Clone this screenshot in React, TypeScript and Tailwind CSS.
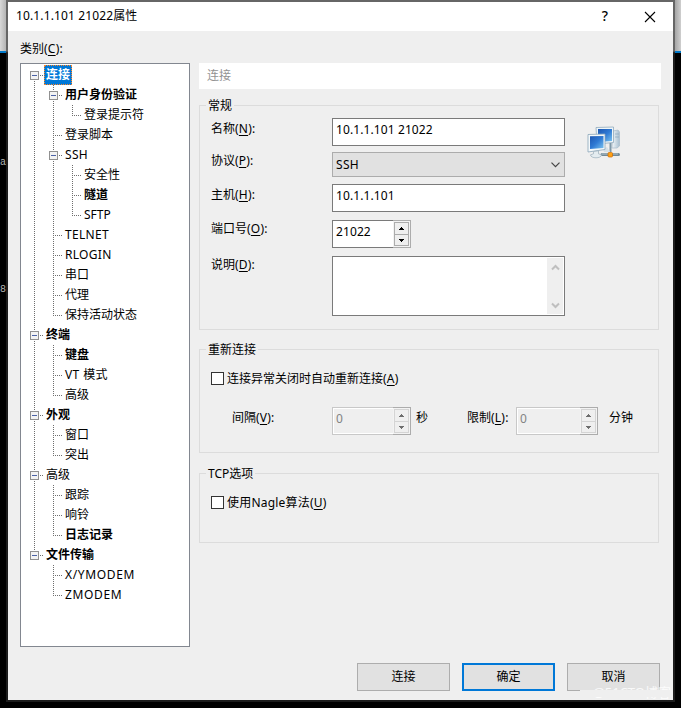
import type { ReactNode } from "react";

type Cell = "line" | "tee" | "end" | "none" | "boxFirst" | "box" | "boxLast";
type Row = { cells: Cell[]; text: string; bold?: boolean; selected?: boolean; spacing?: string };

const rows: Row[] = [
  { cells: ["boxFirst"], text: "连接", bold: true, selected: true },
  { cells: ["line", "box"], text: "用户身份验证", bold: true },
  { cells: ["line", "line", "end"], text: "登录提示符" },
  { cells: ["line", "tee"], text: "登录脚本" },
  { cells: ["line", "box"], text: "SSH", spacing: "tracking-[0.3px]" },
  { cells: ["line", "line", "tee"], text: "安全性" },
  { cells: ["line", "line", "tee"], text: "隧道", bold: true },
  { cells: ["line", "line", "end"], text: "SFTP" },
  { cells: ["line", "tee"], text: "TELNET", spacing: "tracking-[0.3px]" },
  { cells: ["line", "tee"], text: "RLOGIN", spacing: "tracking-[0.3px]" },
  { cells: ["line", "tee"], text: "串口" },
  { cells: ["line", "tee"], text: "代理" },
  { cells: ["line", "end"], text: "保持活动状态" },
  { cells: ["box"], text: "终端", bold: true },
  { cells: ["line", "tee"], text: "键盘", bold: true },
  { cells: ["line", "tee"], text: "VT 模式", spacing: "tracking-[0.4px]" },
  { cells: ["line", "end"], text: "高级" },
  { cells: ["box"], text: "外观", bold: true },
  { cells: ["line", "tee"], text: "窗口" },
  { cells: ["line", "end"], text: "突出" },
  { cells: ["box"], text: "高级" },
  { cells: ["line", "tee"], text: "跟踪" },
  { cells: ["line", "tee"], text: "响铃" },
  { cells: ["line", "end"], text: "日志记录", bold: true },
  { cells: ["boxLast"], text: "文件传输", bold: true },
  { cells: ["none", "tee"], text: "X/YMODEM", spacing: "tracking-[0.65px]" },
  { cells: ["none", "end"], text: "ZMODEM", spacing: "tracking-[0.65px]" },
];

function TreeCell({ kind }: { kind: Cell }) {
  const isBox = kind.startsWith("box");
  const up = kind !== "none" && kind !== "boxFirst";
  const down = kind === "line" || kind === "tee" || kind === "box" || kind === "boxFirst";
  const across = kind !== "line" && kind !== "none";
  return (
    <svg width="19" height="20" className="shrink-0" shapeRendering="crispEdges" fill="none">
      <g stroke="#6e6e6e" strokeDasharray="1 1">
        {up && <path d="M9.5 0V10" />}
        {down && <path d="M9.5 10V20" />}
        {across && <path d="M9 10.5H18" />}
      </g>
      {isBox && (
        <>
          <rect x="5.5" y="6.5" width="8" height="8" fill="#f3f3f3" stroke="#919191" />
          <path d="M7 10.5H12" stroke="#4b63a7" />
        </>
      )}
    </svg>
  );
}

function Key({ text, k, colon = true }: { text: string; k: string; colon?: boolean }) {
  return (
    <span className="whitespace-nowrap">
      {text}
      <span className="tracking-[0.2px]">
        (<span className="underline decoration-1 underline-offset-2">{k}</span>){colon && ":"}
      </span>
    </span>
  );
}

function Field({ label, className, children }: { label: ReactNode; className: string; children: ReactNode }) {
  return (
    <div className="flex items-start">
      <div className={"w-[121px] shrink-0 " + className}>{label}</div>
      {children}
    </div>
  );
}

function Spin({ value, disabled, wide }: { value: string; disabled?: boolean; wide?: boolean }) {
  return (
    <div className={"flex h-7 shrink-0 " + (wide ? "w-[82px]" : "w-[79px]")}>
      <div
        className={
          "flex-1 border border-r-0 pt-[3px] pl-[3px] tracking-[0.1px] " +
          (disabled ? "border-[#c8c8c8] bg-[#efefef] text-[#838383] shadow-[inset_1px_1px_0_#fff,inset_0_-1px_0_#fff]" : "border-[#7a7a7a] bg-white")
        }
      >
        {value}
      </div>
      <div className="w-[18px] border border-l-0 border-[#acacac] bg-[#f3f3f3] py-px pr-px pl-[1px]">
        <svg width="15" height="24" shapeRendering="crispEdges">
          <rect x="0.5" y="0.5" width="14" height="12" fill="#efefef" stroke={disabled ? "#d4d4d4" : "#acacac"} />
          <rect x="0.5" y="12.5" width="14" height="11" fill="#efefef" stroke={disabled ? "#d4d4d4" : "#acacac"} />
          <path d="M7 5h1v1h1v1h1v1H5V7h1V6h1z" fill={disabled ? "#6d6d6d" : "#000"} />
          <path d="M5 17h5v1H9v1H8v1H7v-1H6v-1H5z" fill={disabled ? "#6d6d6d" : "#000"} />
        </svg>
      </div>
    </div>
  );
}

function Group({ title, className, children }: { title: string; className: string; children: ReactNode }) {
  return (
    <section className={"w-[460px] border border-[#dcdcdc] " + className}>
      <h2 className="-mt-2 ml-[6px] h-4 w-fit bg-[#efefef] px-[2px]">{title}</h2>
      {children}
    </section>
  );
}

function Check({ children }: { children: ReactNode }) {
  return (
    <label className="flex h-4 items-start gap-[3px]">
      <span className="mt-px size-[13px] shrink-0 border border-[#333] bg-white" />
      {children}
    </label>
  );
}

function NetIcon() {
  return (
    <svg width="34" height="34" viewBox="0 0 34 34">
      <defs>
        <linearGradient id="screen" x1="0" y1="0" x2="1" y2="1">
          <stop offset="0" stopColor="#1c55b0" />
          <stop offset="0.5" stopColor="#2f7ad4" />
          <stop offset="1" stopColor="#7cc4f0" />
        </linearGradient>
        <linearGradient id="tower" x1="0" y1="0" x2="1" y2="0">
          <stop offset="0" stopColor="#f4f8fa" />
          <stop offset="1" stopColor="#a8bfd0" />
        </linearGradient>
      </defs>
      <path d="M26 5l5-1 1.500 2v14l-2.500 2h-5z" fill="url(#tower)" stroke="#a9bccb" strokeWidth=".7" />
      <path d="M28 8h4M28 11h4" stroke="#8ba7bc" strokeWidth=".7" />
      <path d="M9 1.5l17.500-.5v15.500L10 18z" fill="#eef5f8" stroke="#91aabd" strokeWidth=".8" />
      <path d="M11 3h14v12L11 16z" fill="url(#screen)" />
      <path d="M22.500 17h2v9h-2z" fill="#7e98a9" />
      <path d="M16 23l4-2 3 5h-6z" fill="#d5e0e7" />
      <path d="M15 28.500h16.500" stroke="#718997" strokeWidth="3" strokeLinecap="round" />
      <path d="M15 28h16" stroke="#b7c6ce" strokeWidth="1" />
      <path d="M1 8.500L18 8v15.500L1 26z" fill="#f4f8fa" stroke="#8ca6b9" strokeWidth=".8" />
      <path d="M3 10.300L16.500 10v12L3 23z" fill="url(#screen)" />
      <path d="M6.500 25.500l5-.7v3l3 1c0 4-11 4-11 0l3-1z" fill="#e4ecf0" stroke="#9aadba" strokeWidth=".7" />
      <rect x="21" y="26.500" width="4.500" height="4.500" rx="1" fill="#ffa114" stroke="#c86a09" strokeWidth=".7" />
    </svg>
  );
}

function Backdrop({ left }: { left?: boolean }) {
  return (
    <div className="flex w-1.5 shrink-0 flex-col overflow-hidden bg-black font-['Liberation_Mono',monospace] text-[10px] leading-3 text-[#b5b5b5]">
      <div className={"h-[51px] shrink-0 " + (left ? "bg-linear-to-r from-[#d8d8d8] to-[#b5b5b5]" : "bg-linear-to-r from-[#a5a5a5] to-[#cfcfcf]")} />
      <div className="h-0.5 shrink-0 bg-[#0078c8]" />
      {left && (
        <>
          <span className="mt-[104px]">a</span>
          <span className="mt-[115px]">8</span>
        </>
      )}
    </div>
  );
}

const button = "flex h-7 w-[93px] items-center justify-center bg-[#e1e1e1] pb-px ";

export default function App() {
  return (
    <div className="flex h-[708px] w-[681px] overflow-hidden bg-black font-['Noto_Sans','Noto_Sans_CJK_SC',sans-serif] text-[12px] leading-4 text-black">
      <Backdrop left />
      <main className="h-[702px] w-[669px] shrink-0 bg-linear-to-b from-[#666] from-[51px] to-[#1c1c1c] to-[53px] p-0.5">
        <div className="flex h-[698px] flex-col bg-[#efefef]">
          <header className="flex h-[29px] shrink-0 items-center bg-white pl-2">
            <h1 className="pb-px">
              <span className="tracking-[0.13px]">10.1.1.101 21022</span>属性
            </h1>
            <span className="ml-auto w-2 pb-0.5 text-center text-[14px] font-medium">?</span>
            <svg width="12" height="12" className="mr-[17px] ml-[35px]" stroke="#000" strokeWidth="1.1">
              <path d="M1 1l10 10M11 1L1 11" />
            </svg>
          </header>
          <div className="mt-[10px] ml-3 h-4">
            <Key text="类别" k="C" />
          </div>
          <div className="mt-1.5 ml-3 flex gap-[9px]">
            <nav className="h-[584px] w-[170px] shrink-0 border border-[#828790] bg-white pt-px pl-1">
              {rows.map((r, i) => (
                <div key={i} className="flex h-5">
                  {r.cells.map((c, j) => (
                    <TreeCell key={j} kind={c} />
                  ))}
                  <span
                    className={
                      "h-5 whitespace-nowrap " +
                      (r.bold ? "font-bold " : "") +
                      (r.spacing ? r.spacing + " " : "") +
                      (r.selected ? "border border-dotted border-[#ff8728] bg-[#0078d7] px-px pt-px text-white" : "px-0.5 pt-0.5")
                    }
                  >
                    {r.text}
                  </span>
                </div>
              ))}
            </nav>
            <div>
              <div className="h-[26px] w-[462px] bg-white pt-[5px] pl-2 text-[#929292]">连接</div>
              <Group title="常规" className="mt-4 h-[225px]">
                <div className="flex items-start pt-1 pl-[11px]">
                  <div className="flex w-[354px] flex-col">
                    <Field label={<Key text="名称" k="N" />} className="pt-[3px]">
                      <div className="h-7 w-[233px] border border-[#7a7a7a] bg-white pt-[3px] pl-[3px] tracking-[0.1px]">10.1.1.101 21022</div>
                    </Field>
                    <div className="h-1.5" />
                    <Field label={<Key text="协议" k="P" />} className="pt-px">
                      <div className="flex h-[25px] w-[233px] items-center justify-between border border-[#acacac] bg-[#e1e1e1] pr-1 pl-[3px] tracking-[0.3px]">
                        SSH
                        <svg width="9" height="6" fill="none" stroke="#444" strokeWidth="1.2">
                          <path d="M.5 .7l4 4 4-4" />
                        </svg>
                      </div>
                    </Field>
                    <div className="h-[7px]" />
                    <Field label={<Key text="主机" k="H" />} className="pt-[3px]">
                      <div className="h-7 w-[233px] border border-[#7a7a7a] bg-white pt-[3px] pl-[3px] tracking-[0.1px]">10.1.1.101</div>
                    </Field>
                    <div className="h-2" />
                    <Field label={<Key text="端口号" k="O" />} className="pt-px">
                      <Spin value="21022" />
                    </Field>
                    <div className="h-2" />
                    <Field label={<Key text="说明" k="D" />} className="pt-px">
                      <div className="flex h-[60px] w-[233px] justify-end border border-[#7a7a7a] bg-white p-px">
                        <div className="flex w-4 flex-col items-center justify-between bg-[#efefef] pt-1.5 pb-[5px]">
                          <svg width="9" height="7" fill="none" stroke="#bfbfbf" strokeWidth="2">
                            <path d="M1 5.500l3.500-3.500L8 5.500" />
                          </svg>
                          <svg width="9" height="7" fill="none" stroke="#bfbfbf" strokeWidth="2">
                            <path d="M1 1.500l3.500 3.500L8 1.500" />
                          </svg>
                        </div>
                      </div>
                    </Field>
                  </div>
                  <div className="mt-2 ml-[22px]">
                    <NetIcon />
                  </div>
                </div>
              </Group>
              <Group title="重新连接" className="mt-[19px] h-[104px]">
                <div className="pt-[13px] pl-[11px]">
                  <Check>
                    <Key text="连接异常关闭时自动重新连接" k="A" colon={false} />
                  </Check>
                  <div className="mt-5 ml-[21px] flex">
                    <div className="w-[100px] pt-[3px]">
                      <Key text="间隔" k="V" />
                    </div>
                    <Spin value="0" disabled />
                    <div className="ml-[5px] w-[51px] pt-[3px]">秒</div>
                    <div className="w-[49px] pt-[3px]">
                      <Key text="限制" k="L" />
                    </div>
                    <Spin value="0" disabled wide />
                    <div className="ml-[11px] pt-[3px]">分钟</div>
                  </div>
                </div>
              </Group>
              <Group title="TCP选项" className="mt-5 h-[70px]">
                <div className="pt-[13px] pl-[11px] tracking-[0.2px]">
                  <Check>
                    <Key text="使用Nagle算法" k="U" colon={false} />
                  </Check>
                </div>
              </Group>
            </div>
          </div>
          <footer className="relative mt-4 flex justify-end gap-3 pr-[13px]">
            <div className={button + "border border-[#adadad]"}>连接</div>
            <div className={button + "border-2 border-[#0078d7]"}>确定</div>
            <div className={button + "border border-[#adadad]"}>取消</div>
            <span className="absolute top-[21px] right-0.5 text-[13px] leading-4 whitespace-nowrap text-white/80">@51CTO博客</span>
            <div className="absolute top-[27px] right-0 h-[7px] w-[93px] bg-[#efefef]" />
          </footer>
        </div>
      </main>
      <Backdrop />
    </div>
  );
}
